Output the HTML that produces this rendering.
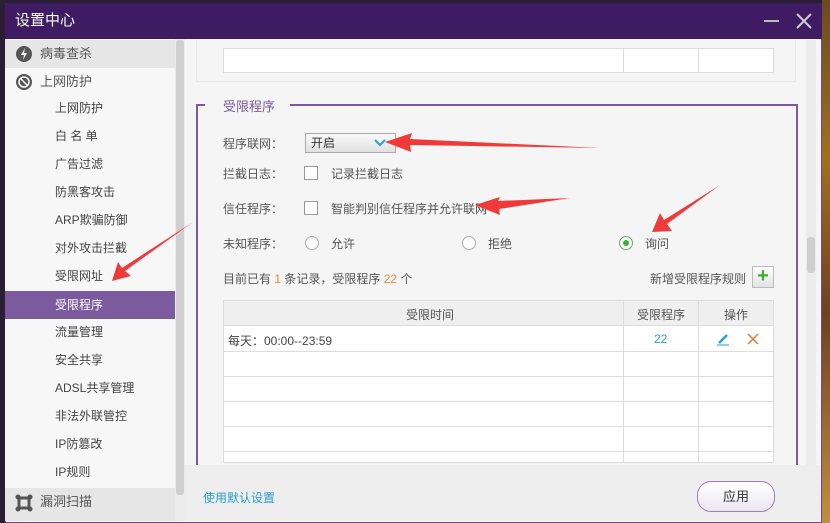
<!DOCTYPE html>
<html><head><meta charset="utf-8"><style>
*{margin:0;padding:0;box-sizing:border-box}
body{width:830px;height:523px;overflow:hidden;background:#2b1d33;font-family:"Liberation Sans","Noto Sans CJK SC",sans-serif;font-size:12px;color:#444;position:relative}
.a{position:absolute}
.bg{left:822px;top:0;width:8px;height:523px;background:linear-gradient(#6a4a20,#a07020 30%,#704020 60%,#c09040)}
.win{left:5px;top:3px;width:817px;height:520px;background:#f5f5f5;border:1px solid #6b4a8e;border-top:none}
.title{left:5px;top:3px;width:817px;height:36px;background:#3e1b62;color:#fff;font-size:15px;line-height:36px;padding-left:10px}
.side{left:5px;top:39px;width:170px;height:482px;background:#f7f7f7}
.it{position:absolute;left:0;width:170px;height:28px;line-height:28px;padding-left:50px;font-size:12px;color:#444}
.top{font-size:13px;padding-left:35px;color:#555}
.sel{background:#7b5a9e;color:#fff}
.cell{position:absolute;border:1px solid #ddd;background:#fff}
.lbl{position:absolute;font-size:12px;color:#555}
.cb{position:absolute;width:14px;height:14px;border:1px solid #999;background:#fff}
.rd{position:absolute;width:14px;height:14px;border:1px solid #aaa;border-radius:50%;background:#fff}
</style></head><body>
<div class="a bg"></div>
<div class="a win"></div>
<div class="a title">设置中心
<div class="a" style="left:759px;top:17px;width:15px;height:2px;background:#bbb"></div>
<svg class="a" style="left:790px;top:9px" width="18" height="18"><path d="M2 2L16 16M16 2L2 16" stroke="#ccc" stroke-width="2"/></svg>
</div>
<div class="a side">
<div class="it top" style="top:1px;background:#e6e6e6">病毒查杀</div>
<div class="it top" style="top:29px">上网防护</div>
<div class="it" style="top:55px">上网防护</div>
<div class="it" style="top:83px">白 名 单</div>
<div class="it" style="top:111px">广告过滤</div>
<div class="it" style="top:139px">防黑客攻击</div>
<div class="it" style="top:167px">ARP欺骗防御</div>
<div class="it" style="top:195px">对外攻击拦截</div>
<div class="it" style="top:223px">受限网址</div>
<div class="it sel" style="top:252px">受限程序</div>
<div class="it" style="top:279px">流量管理</div>
<div class="it" style="top:307px">安全共享</div>
<div class="it" style="top:335px">ADSL共享管理</div>
<div class="it" style="top:363px">非法外联管控</div>
<div class="it" style="top:391px">IP防篡改</div>
<div class="it" style="top:419px">IP规则</div>
<div class="it top" style="top:449px;height:33px;line-height:28px;background:#e6e6e6">漏洞扫描</div>
<svg class="a" style="left:10px;top:6px" width="18" height="18"><circle cx="9" cy="9" r="8" fill="#555"/><path d="M10 3L6 10H9L8 15L12 8H9Z" fill="#fff"/></svg>
<svg class="a" style="left:10px;top:34px" width="18" height="18"><circle cx="9" cy="9" r="8" fill="#555"/><circle cx="9" cy="9" r="5" fill="none" stroke="#fff" stroke-width="1.5"/><path d="M5 5L13 13" stroke="#fff" stroke-width="1.5"/></svg>
<svg class="a" style="left:10px;top:455px" width="18" height="18"><rect x="4" y="4" width="10" height="10" fill="none" stroke="#555" stroke-width="3"/><circle cx="3" cy="3" r="2.5" fill="#555"/><circle cx="15" cy="3" r="2.5" fill="#555"/><circle cx="3" cy="15" r="2.5" fill="#555"/><circle cx="15" cy="15" r="2.5" fill="#555"/></svg>
</div>
<div class="a" style="left:175px;top:39px;width:10px;height:482px;background:#ececec"><div class="a" style="left:1px;top:1px;width:8px;height:455px;background:#cfcfcf;border-radius:3px"></div></div>
<div class="a" style="left:806px;top:40px;width:10px;height:425px;background:#ececec"><div class="a" style="left:1px;top:197px;width:8px;height:36px;background:#cfcfcf;border-radius:3px"></div></div>
<!-- top box -->
<div class="a" style="left:196px;top:40px;width:600px;height:42px;border:1px solid #e8e8e8;border-top:none;background:#f5f5f5"></div>
<div class="cell" style="left:223px;top:48px;width:401px;height:25px"></div>
<div class="cell" style="left:623px;top:48px;width:76px;height:25px"></div>
<div class="cell" style="left:698px;top:48px;width:76px;height:25px"></div>
<!-- group -->
<div class="a" style="left:196px;top:104px;width:602px;height:362px;border:2px solid #7b5a9e;border-bottom:none"></div>
<div class="a" style="left:205px;top:96px;width:85px;height:16px;background:#f5f5f5;color:#7b5a9e;font-size:13px;padding-left:18px">受限程序</div>
<div class="lbl" style="left:223px;top:135px">程序联网：</div>
<div class="a" style="left:305px;top:133px;width:91px;height:20px;border:1px solid #aaa;background:linear-gradient(#fafafa,#e0e0e0);font-size:12px;line-height:18px;padding-left:5px;color:#333">开启</div>
<svg class="a" style="left:374px;top:139px" width="12" height="8"><path d="M1 1L6 6L11 1" stroke="#2a9fd6" stroke-width="2" fill="none"/></svg>
<div class="lbl" style="left:223px;top:165px">拦截日志：</div>
<div class="cb" style="left:304px;top:166px"></div>
<div class="lbl" style="left:331px;top:165px">记录拦截日志</div>
<div class="lbl" style="left:223px;top:200px">信任程序：</div>
<div class="cb" style="left:304px;top:201px"></div>
<div class="lbl" style="left:331px;top:200px">智能判别信任程序并允许联网</div>
<div class="lbl" style="left:223px;top:235px">未知程序：</div>
<div class="rd" style="left:305px;top:236px"></div><div class="lbl" style="left:331px;top:235px">允许</div>
<div class="rd" style="left:462px;top:236px"></div><div class="lbl" style="left:488px;top:235px">拒绝</div>
<div class="rd" style="left:619px;top:236px;border-color:#6a6"><div class="a" style="left:3px;top:3px;width:6px;height:6px;border-radius:50%;background:#3ab030"></div></div><div class="lbl" style="left:645px;top:235px">询问</div>
<div class="lbl" style="left:223px;top:270px">目前已有 <span style="color:#e8893a">1</span> 条记录，受限程序 <span style="color:#e8893a">22</span> 个</div>
<div class="lbl" style="left:650px;top:270px">新增受限程序规则</div>
<div class="a" style="left:752px;top:266px;width:22px;height:22px;border:1px solid #bbb;background:linear-gradient(#fff,#e2e2e2);color:#3ab030;font-size:20px;font-weight:bold;line-height:19px;text-align:center">+</div>
<!-- table -->
<div class="a" style="left:223px;top:300px;width:551px;height:163px;overflow:hidden;background:#fff;border:1px solid #ddd">
<div class="a" style="left:0;top:0;width:551px;height:25px;background:#efefef;border-bottom:1px solid #ddd"></div>
<div class="a" style="left:0;top:50px;width:551px;border-top:1px solid #ddd"></div>
<div class="a" style="left:0;top:75px;width:551px;border-top:1px solid #ddd"></div>
<div class="a" style="left:0;top:100px;width:551px;border-top:1px solid #ddd"></div>
<div class="a" style="left:0;top:125px;width:551px;border-top:1px solid #ddd"></div>
<div class="a" style="left:0;top:150px;width:551px;border-top:1px solid #ddd"></div>
<div class="a" style="left:399px;top:0;height:163px;border-left:1px solid #ddd"></div>
<div class="a" style="left:474px;top:0;height:163px;border-left:1px solid #ddd"></div>
<div class="lbl" style="left:182px;top:5px">受限时间</div>
<div class="lbl" style="left:413px;top:5px">受限程序</div>
<div class="lbl" style="left:500px;top:5px">操作</div>
<div class="lbl" style="left:4px;top:31px;color:#444">每天：00:00--23:59</div>
<div class="lbl" style="left:430px;top:31px;color:#2a9fd6">22</div>
<svg class="a" style="left:492px;top:31px" width="14" height="14"><path d="M3 11L11 3" stroke="#2a9fd6" stroke-width="2.5"/><path d="M1 13H13" stroke="#2a9fd6" stroke-width="1"/></svg>
<svg class="a" style="left:523px;top:32px" width="12" height="12"><path d="M1 1L11 11M11 1L1 11" stroke="#e07a3a" stroke-width="1.5"/></svg>
</div>
<!-- footer -->
<div class="a" style="left:185px;top:465px;width:636px;height:56px;background:#eeeeee"></div>
<div class="lbl" style="left:203px;top:489px;color:#2a9fd6">使用默认设置</div>
<div class="a" style="left:697px;top:481px;width:78px;height:31px;border:1px solid #9b80b8;border-radius:14px;background:linear-gradient(#fff,#ece6f2);text-align:center;line-height:29px;font-size:13px;color:#333">应用</div>
<!-- arrows -->
<svg class="a" style="left:0;top:0" width="830" height="523">
<g fill="#f03a3a">
<polygon points="385,142 412,133 410,139 600,148 410,145 411,152"/>
<polygon points="475,205 500,197 498,201 570,198 499,209 500,215"/>
<polygon points="652,232 660,213 664,220 720,185 667,224 672,231"/>
<polygon points="112,281 118,262 122,268 193,222 125,271 131,276"/>
</g>
</svg>
</body></html>
